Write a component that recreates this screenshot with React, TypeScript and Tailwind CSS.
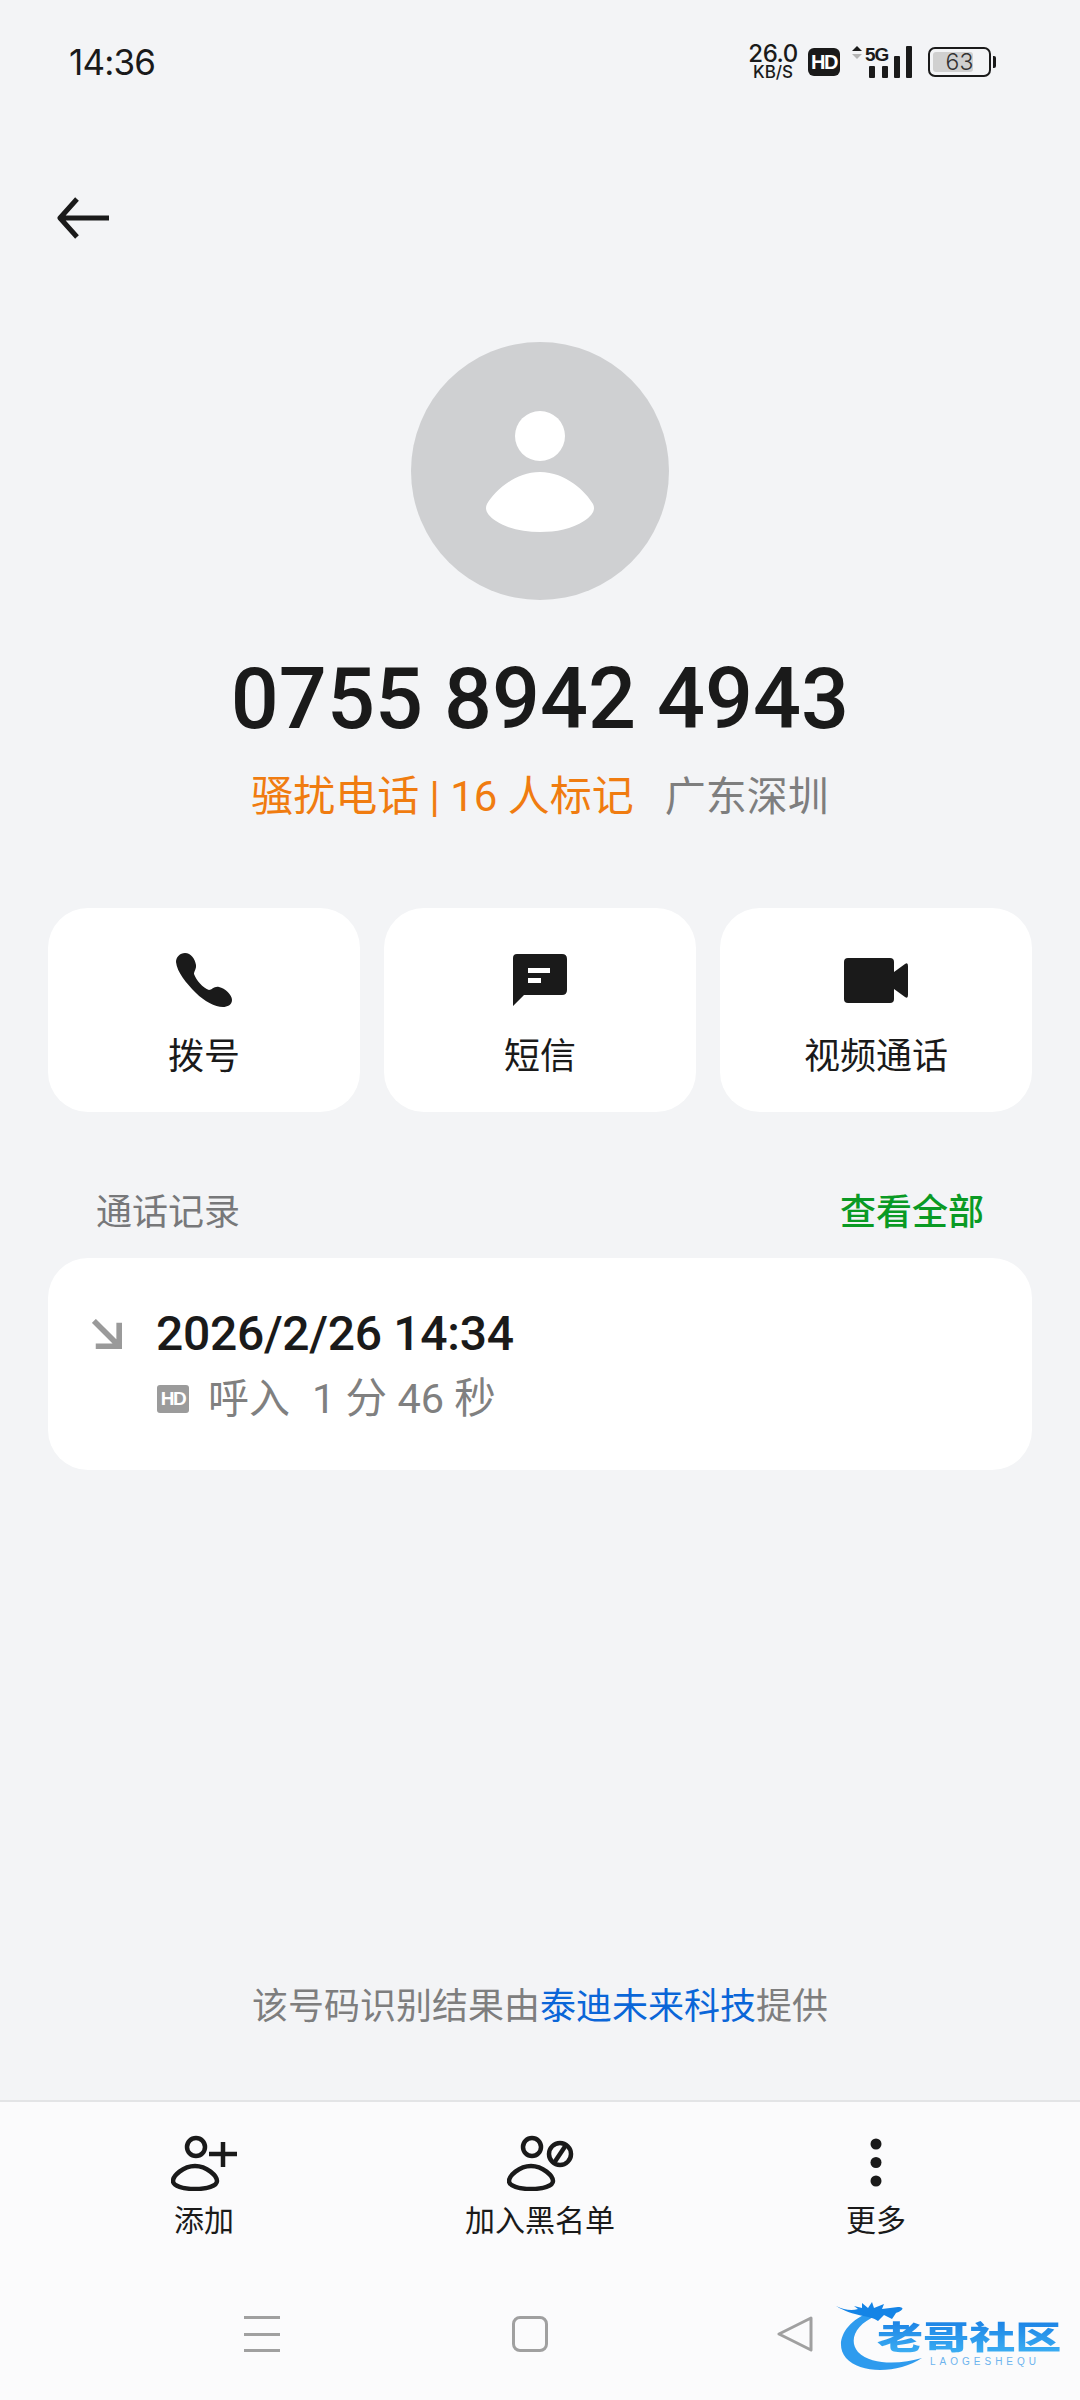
const cjk = "font-['Roboto','Noto_Sans_CJK_SC',sans-serif]";

const StatusBar = () => (
  <div className="h-[124px] flex items-center justify-between pl-[69px] pr-[84px]">
    <span className="text-[35px] leading-none text-[#1a1a1a] font-['Inter',sans-serif] tracking-[-0.8px]">14:36</span>
    <div className="flex items-center">
      <div className="flex flex-col items-center font-['Inter',sans-serif] text-[#1a1a1a] w-[50px]">
        <span className="text-[24px] leading-[20px] font-medium tracking-[-0.5px]">26.0</span>
        <span className="text-[17px] leading-[16px] font-medium">KB/S</span>
      </div>
      <div className="ml-[10px] w-[32px] h-[28px] rounded-[6px] bg-[#1a1a1a] text-white text-[20px] font-bold leading-[28px] text-center font-['Liberation_Sans',sans-serif] tracking-[-1.5px]">HD</div>
      <svg className="ml-[12px] overflow-visible" width="60" height="34" viewBox="0 0 60 34">
        <path d="M0 6 L5 1 L10 6 Z" fill="#1a1a1a" />
        <path d="M0 9 L5 14 L10 9 Z" fill="#b5b5b5" />
        <rect x="17" y="21" width="6" height="12" rx="1" fill="#1a1a1a" />
        <rect x="30" y="21" width="6" height="12" rx="1" fill="#1a1a1a" />
        <rect x="42" y="11" width="6" height="22" rx="1" fill="#1a1a1a" />
        <rect x="54" y="1" width="6" height="32" rx="1" fill="#1a1a1a" />
        <text x="13" y="16" fontSize="19" fontWeight="700" fontFamily="Liberation Sans" fill="#1a1a1a" letterSpacing="-1">5G</text>
      </svg>
      <div className="ml-[16px] flex items-center">
        <div className="w-[63px] h-[30px] rounded-[7px] border-2 border-[#1a1a1a] p-[3px] relative">
          <div className="h-full w-[40px] bg-[#d0d0d0] rounded-[3px]" />
          <span className="absolute inset-0 text-center text-[23px] leading-[26px] font-light text-[#333333] font-['Inter',sans-serif]">63</span>
        </div>
        <div className="ml-[2px] w-[3px] h-[12px] rounded-r-[2px] bg-[#1a1a1a]" />
      </div>
    </div>
  </div>
);

const ActionCard = ({ icon, label }: { icon: React.ReactNode; label: string }) => (
  <div className="flex-1 h-[204px] bg-white rounded-[40px] flex flex-col items-center">
    <div className="h-[60px] mt-[42px] flex items-center justify-center">{icon}</div>
    <span className={`mt-[25px] text-[36px] leading-[44px] text-[#1a1a1a] ${cjk}`}>{label}</span>
  </div>
);

const BottomItem = ({ icon, label, className }: { icon: React.ReactNode; label: string; className: string }) => (
  <div className={`flex flex-col items-center ${className}`}>
    <div className="h-[58px] flex items-center justify-center">{icon}</div>
    <span className={`mt-[9px] text-[30px] leading-[40px] text-[#1a1a1a] ${cjk}`}>{label}</span>
  </div>
);

export default function App() {
  return (
    <div className="w-[1080px] h-[2400px] bg-[#f3f4f6] flex flex-col overflow-hidden">
      <StatusBar />

      <div className="pl-[57px] mt-[72px] h-[52px]">
        <svg width="54" height="44" viewBox="0 0 54 44" fill="none" stroke="#1a1a1a" strokeWidth="5" strokeLinecap="round" strokeLinejoin="round">
          <path d="M52 22 H3 M20 3 L3 22 L20 41" strokeLinecap="butt" />
        </svg>
      </div>

      <div className="flex justify-center mt-[94px]">
        <div className="w-[258px] h-[258px] rounded-full bg-[#cfd0d2] flex flex-col items-center">
          <div className="w-[50px] h-[50px] rounded-full bg-white mt-[69px]" />
          <svg className="mt-[11px]" width="108" height="60" viewBox="0 0 108 60">
            <path d="M54 0 C80 0 100 20 107 32 C110 38 106 44 98 49 C86 57 70 60 54 60 C38 60 22 57 10 49 C2 44 -2 38 1 32 C8 20 28 0 54 0 Z" fill="#fff" />
          </svg>
        </div>
      </div>

      <div className="mt-[50px] text-center text-[84.5px] leading-[100px] font-medium text-[#1a1a1a] font-['Roboto',sans-serif]">0755 8942 4943</div>

      <div className={`mt-[17px] flex justify-center items-center text-[42px] leading-[60px] ${cjk}`}>
        <span className="text-[#f07c10]">骚扰电话 | 16 人标记</span>
        <span className="ml-[31px] text-[41px] text-[#7e7e7e]">广东深圳</span>
      </div>

      <div className="mt-[81px] px-[48px] flex gap-[24px]">
        <ActionCard
          label="拨号"
          icon={
            <svg width="56" height="54" viewBox="0 0 56 54">
              <path d="M9 0 C15 0 19 6 20 12 C20.5 16 18 18 18 21 C20 27 27 35 33 37 C36 37 38 33 43 34 C49 35 56 42 56 47 C56 52 51 54 47 54 C39 54 28 48 20 40 C10 30 1 19 0 9 C0 4 4 0 9 0 Z" fill="#1a1a1a" />
            </svg>
          }
        />
        <ActionCard
          label="短信"
          icon={
            <svg width="54" height="52" viewBox="0 0 54 52">
              <path d="M4 0 H49 Q54 0 54 5 V36 Q54 41 49 41 H11 L0 52 V4 Q0 0 4 0 Z" fill="#1a1a1a" />
              <rect x="15" y="14" width="22" height="5" fill="#fff" />
              <rect x="15" y="24" width="13" height="5" fill="#fff" />
            </svg>
          }
        />
        <ActionCard
          label="视频通话"
          icon={
            <svg width="64" height="45" viewBox="0 0 64 45">
              <rect x="0" y="0" width="50" height="45" rx="4" fill="#1a1a1a" />
              <path d="M50 14 L61 6 Q64 4 64 8 V37 Q64 41 61 39 L50 31 Z" fill="#1a1a1a" />
            </svg>
          }
        />
      </div>

      <div className={`mt-[76px] px-[96px] flex items-center justify-between h-[50px] ${cjk}`}>
        <span className="text-[36px] text-[#77787a]">通话记录</span>
        <span className="text-[36px] font-medium text-[#0a9a24]">查看全部</span>
      </div>

      <div className="mt-[20px] mx-[48px] h-[212px] bg-white rounded-[40px] pl-[44px] pt-[50px] flex">
        <svg className="mt-[11px]" width="30" height="30" viewBox="0 0 32 32" fill="none" stroke="#9a9a9a" strokeWidth="6">
          <path d="M2 2 L27 27 M29 4 V29 H4" />
        </svg>
        <div className="ml-[34px] flex flex-col">
          <span className="text-[48px] leading-[52px] font-medium tracking-[-0.3px] text-[#1a1a1a] font-['Roboto',sans-serif]">2026/2/26 14:34</span>
          <div className="flex items-center mt-[13px] h-[52px]">
            <div className="ml-[1px] w-[32px] h-[28px] rounded-[3px] bg-[#9b9b9b] text-white text-[19px] leading-[28px] font-bold text-center font-['Liberation_Sans',sans-serif] tracking-[-1.5px]">HD</div>
            <span className={`ml-[19px] text-[41px] leading-[52px] text-[#808080] ${cjk}`}>呼入</span>
            <span className={`ml-[22px] text-[41.5px] leading-[52px] text-[#808080] ${cjk}`}>1 分 46 秒</span>
          </div>
        </div>
      </div>

      <div className={`mt-[512px] text-center text-[36px] leading-[50px] text-[#7e7e7e] ${cjk}`}>
        该号码识别结果由<span className="text-[#0a66d8]">泰迪未来科技</span>提供
      </div>

      <div className="mt-[68px] flex-1 bg-[#fbfbfc] border-t-2 border-[#e3e4e6] flex flex-col">
        <div className="flex pt-[32px] h-[180px]">
          <BottomItem
            className="w-[204px] ml-[102px]"
            label="添加"
            icon={
              <svg className="ml-[1px]" width="68" height="56" viewBox="0 0 68 56" fill="none" stroke="#1a1a1a" strokeWidth="4.5">
                <circle cx="25" cy="12" r="9" />
                <path d="M24 31 C36 31 46 41 46 46 C46 51 36 54 24 54 C12 54 2 51 2 46 C2 41 12 31 24 31 Z" />
                <path d="M38 19 H66 M52 7 V32" />
              </svg>
            }
          />
          <BottomItem
            className="w-[204px] ml-[132px]"
            label="加入黑名单"
            icon={
              <svg className="ml-[1px]" width="68" height="56" viewBox="0 0 68 56" fill="none" stroke="#1a1a1a" strokeWidth="4.5">
                <circle cx="25" cy="12" r="9" />
                <path d="M24 31 C36 31 46 41 46 46 C46 51 36 54 24 54 C12 54 2 51 2 46 C2 41 12 31 24 31 Z" />
                <circle cx="53" cy="19" r="11" />
                <path d="M47 28 L59 10" />
              </svg>
            }
          />
          <BottomItem
            className="w-[204px] ml-[132px]"
            label="更多"
            icon={
              <svg width="12" height="50" viewBox="0 0 12 50" fill="#1a1a1a">
                <circle cx="6" cy="6" r="5.5" />
                <circle cx="6" cy="24.5" r="5.5" />
                <circle cx="6" cy="43" r="5.5" />
              </svg>
            }
          />
        </div>

        <div className="relative flex-1 flex items-start pt-[34px]">
          <div className="ml-[244px] w-[36px] h-[36px] flex flex-col justify-between">
            <div className="h-[3px] bg-[#a0a0a0]" />
            <div className="h-[3px] bg-[#a0a0a0]" />
            <div className="h-[3px] bg-[#a0a0a0]" />
          </div>
          <div className="ml-[232px] w-[36px] h-[36px] rounded-[8px] border-[3px] border-[#a0a0a0]" />
          <svg className="ml-[229px]" width="36" height="36" viewBox="0 0 36 36" fill="none" stroke="#a0a0a0" strokeWidth="3" strokeLinejoin="round">
            <path d="M34 2 L2 18 L34 34 Z" />
          </svg>
          {/* watermark */}
          <div className="absolute left-[836px] top-[16px] w-[228px] h-[76px]">
            <svg className="absolute left-0 top-0" width="100" height="76" viewBox="0 0 100 76" fill="none">
              <path d="M34 14 C8 24 -2 46 10 60 C24 76 62 76 86 60 C66 66 36 68 22 54 C12 42 20 26 40 18 Z" fill="#2e9bee" />
              <path d="M0 8 C8 12 16 13 22 11 L18 8 L26 10 L26 5 L32 10 L36 4 L38 10 L48 6 L46 11 L62 9 C70 9 66 13 60 15 L56 21 L48 17 L42 23 C34 17 18 19 0 8 Z" fill="#1484e6" />
            </svg>
            <span className={`absolute left-[41px] top-[20px] text-[32px] leading-[40px] font-black whitespace-nowrap origin-left scale-x-[1.44] bg-gradient-to-b from-[#1a7fe4] to-[#40b4f4] bg-clip-text text-transparent ${cjk}`}>老哥社区</span>
            <span className="absolute left-[94px] top-[58px] text-[10px] leading-[12px] text-[#6db4ee] tracking-[4px] whitespace-nowrap font-['Liberation_Sans',sans-serif]">LAOGESHEQU</span>
          </div>
        </div>
      </div>
    </div>
  );
}
